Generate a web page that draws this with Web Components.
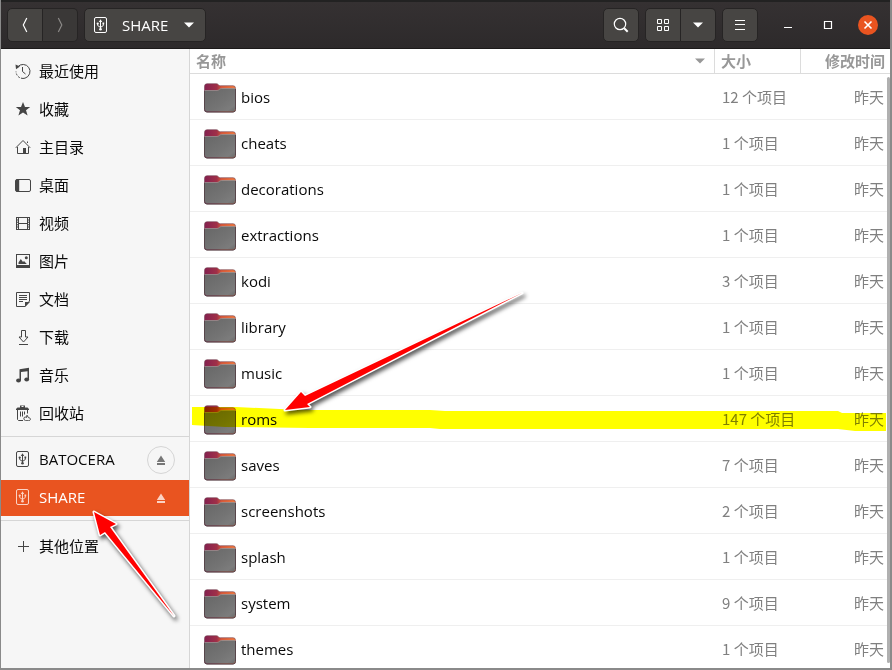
<!DOCTYPE html>
<html lang="zh-CN">
<head>
<meta charset="utf-8">
<title>SHARE</title>
<style>
  html, body { height: 100%; margin: 0; }
  body {
    background: #8a8a8a;
    font: 15px/20px "Open Sans", "Noto Sans CJK SC", sans-serif;
    color: #0a0a0a;
    overflow: hidden;
  }
</style>
</head>
<body>
<file-window>
  <header-bar slot="header"></header-bar>
  <places-bar slot="places">
    <place-item icon="recent">最近使用</place-item>
    <place-item icon="star">收藏</place-item>
    <place-item icon="home">主目录</place-item>
    <place-item icon="desktop">桌面</place-item>
    <place-item icon="video">视频</place-item>
    <place-item icon="picture">图片</place-item>
    <place-item icon="document">文档</place-item>
    <place-item icon="download">下载</place-item>
    <place-item icon="music">音乐</place-item>
    <place-item icon="trash">回收站</place-item>
    <place-item slot="devices" icon="usb" eject="ring">BATOCERA</place-item>
    <place-item slot="devices" icon="usb" eject selected>SHARE</place-item>
    <place-item slot="other" icon="plus">其他位置</place-item>
  </places-bar>
  <file-list slot="files"></file-list>
  <mark-layer slot="marks"></mark-layer>
</file-window>

<script>
const shadow = (host, html) => {
  const t = document.createElement('template');
  t.innerHTML = html;
  host.attachShadow({ mode: 'open' }).appendChild(t.content.cloneNode(true));
};

const F = 'fill="currentColor" stroke="none"';
const ICONS = {
  recent: `<path d="M2.600 4A7 7 0 1 1 1 8.500" stroke-dasharray="30 1.300 2 1.300 2 1.300"/><path ${F} d="M.5 1.500 5 3.500 1 6.200z"/><path d="M7.500 4v4.500l3 2.500"/>`,
  star: `<path ${F} d="M8 1l2 5h5.200l-4.200 3.300 1.600 5.200L8 11.400l-4.600 3.100L5 9.300.8 6H6z"/>`,
  home: `<path d="M.8 8.800 8 1.500l7.200 7.300M2.500 8v6.500h11V8M12.500 4V2.500"/><path ${F} d="M8 9h3v5.500H8z"/>`,
  desktop: `<rect x=".5" y="2.500" width="15" height="12" rx="1.500"/><path ${F} d="M1 2.500h3.200v12H1z"/>`,
  video: `<path d="M3.500 2.500h9v12h-9zM3.500 8.500h9"/><path d="M1.500 2V15M14.500 2V15" stroke-width="1"/><path d="M2.500 2V15M13.500 2V15" stroke-width="2" stroke-dasharray="1 1.400"/><path d="M1 2.500h14M1 14.500h14"/>`,
  picture: `<rect x="1.500" y="1.500" width="13" height="13"/><path ${F} d="M1 12h14v3H1zM3.500 11V9.500l2.300-3.500L8 9l1-1 2.800 3z"/><circle ${F} cx="11.300" cy="4.800" r="1.500"/>`,
  document: `<path d="M1.500 1.500h13v8.500L10 15.500H1.500zM4 4.500h8M4 6.500h8M4 8.500h8M4 10.500h4"/><path ${F} d="M10 16v-5h5z"/>`,
  download: `<path d="M6.500 1.500h4v6.500h2.500L8.500 13 4 8h2.500zM4 15.500h9"/>`,
  music: `<path ${F} d="M4.500 2.200 14 .8v11.700h-1.500V4.200L6 5v8.500H4.500z"/><ellipse ${F} cx="3.500" cy="13.400" rx="2.400" ry="2"/><ellipse ${F} cx="11.700" cy="12.400" rx="2.400" ry="2"/>`,
  trash: `<path ${F} d="M1 5V4l1.500-1.500H5V.500h5v2h2.500L14 4v1z"/><path d="M6.500 1.500h2" stroke="#f6f6f6"/><path d="M2.500 5v9.500l1 1h4.500M5.500 6.500v5M7.500 6.500v5M9.500 6.500v3M12.500 5v3.500"/><path d="M9 14.500c-.6-2 .8-3.200 2.500-2l.5-2.300 1.500 2.500c2.600 0 2.500 3 0 3h-3z"/>`,
  usb: `<rect x="1.500" y=".5" width="12" height="15" rx="1.500"/><path d="M7.500 3.500v9M4.700 6.500v2l2.800 2 2.800-2v-2"/><path ${F} d="M7.500 2.200 9.200 5H5.800zM9.500 5.500h1.700v1.800H9.500z"/><circle ${F} cx="4.700" cy="6.500" r="1.100"/><circle ${F} cx="7.500" cy="12.300" r="1.300"/>`,
  plus: `<path d="M8.500 3v11M3 8.500h11"/>`,
  eject: `<path ${F} d="M8 3.500 12.200 10H3.800zM4 11h8v2H4z"/>`,
  back: `<path d="M9.800 1 6.300 8l3.500 7" stroke-width="1.200"/>`,
  forward: `<path d="M6.300 1l3.500 7-3.500 7" stroke-width="1.200"/>`,
  down: `<path ${F} d="M3 5.500h10L8 10.500z"/>`,
  search: `<circle cx="7" cy="7" r="5.700" stroke-width="1.200"/><path d="M11.200 11.200l3.500 3.500" stroke-width="2"/>`,
  grid: `<path d="M2.500 2.500h4v4h-4zM9.500 2.500h4v4h-4zM2.500 9.500h4v4h-4zM9.500 9.500h4v4h-4z"/>`,
  menu: `<path d="M3 3.500h10M3 7.500h10M3 12.500h10"/>`,
  minimize: `<path d="M4 10.500h8"/>`,
  maximize: `<path d="M4.500 4.500h7v7h-7z" stroke-width="1.200"/>`,
  close: `<path d="M4.500 4.500l7 7M11.500 4.500l-7 7" stroke-width="1.600"/>`
};

customElements.define('ui-icon', class extends HTMLElement {
  connectedCallback() {
    if (this.shadowRoot) return;
    shadow(this, `
      <style>:host{display:block;flex:none;width:16px;height:16px} svg{display:block}</style>
      <svg width="16" height="16" viewBox="0 0 16 16" fill="none" stroke="currentColor" aria-hidden="true">${ICONS[this.getAttribute('name')]}</svg>`);
  }
});

customElements.define('folder-icon', class extends HTMLElement {
  connectedCallback() {
    if (this.shadowRoot) return;
    shadow(this, `
      <style>:host{display:block;flex:none;width:32px;height:30px} svg{display:block}</style>
      <svg width="32" height="30" viewBox="0 0 32 30" aria-hidden="true">
        <defs>
          <linearGradient id="b"><stop stop-color="#84204f"/><stop offset=".4" stop-color="#a03048"/><stop offset=".55" stop-color="#d8593a"/><stop offset="1" stop-color="#f07a40"/></linearGradient>
          <linearGradient id="f" x2="1" y2="1"><stop stop-color="#666"/><stop offset=".6" stop-color="#747474"/><stop offset=".85" stop-color="#7c7c7c"/><stop offset="1" stop-color="#6a6a6a"/></linearGradient>
        </defs>
        <path d="M.5 3.500Q.5.700 3 .7h9.500q1 0 1.800 1t2 1H29q2.500 0 2.500 2.600v21.200q0 2.500-2.500 2.500H3q-2.500 0-2.500-2.500z" fill="url(#b)" stroke="#6a3d4a" stroke-opacity=".55"/>
        <path d="M1 7.500h12c2 0 2.500-2 4.500-2H31v20.800q0 2.200-2.200 2.200H3.200Q1 28.500 1 26.300z" fill="url(#f)"/>
        <path d="M1 7.500h12c2 0 2.500-2 4.500-2H31" fill="none" stroke="#999091" stroke-width=".8"/>
        <path d="M.5 8v18.500Q.5 29 3 29h26q2.500 0 2.500-2.500V6" fill="none" stroke="#57464b"/>
      </svg>`);
  }
});

customElements.define('tool-button', class extends HTMLElement {
  connectedCallback() {
    if (this.shadowRoot) return;
    const label = this.getAttribute('label');
    shadow(this, `
      <style>
        :host{display:block}
        button{box-sizing:border-box;display:flex;align-items:center;justify-content:center;gap:13px;min-width:36px;height:34px;
          margin:0;padding:0 8px;border:1px solid #262424;border-radius:var(--r,5px);background:#474543;color:#fff;font:inherit}
        :host([join=left]) button{--r:5px 0 0 5px}
        :host([join=right]) button{--r:0 5px 5px 0;border-left:0;min-width:35px}
        :host([dim]) button{background:#3a3837;color:#8c8a88}
        :host([flat]) button{min-width:20px;width:20px;height:20px;padding:0;border:0;border-radius:50%;background:none}
        :host([flat=close]) button{background:#e95420}
        ::slotted(span){padding-bottom:1px}
      </style>
      <button ${label ? `aria-label="${label}"` : ''}><slot></slot></button>`);
  }
});

customElements.define('header-bar', class extends HTMLElement {
  constructor() {
    super();
    shadow(this, `
      <style>
        :host{display:flex;align-items:center;box-sizing:border-box;height:49px;padding:0 12px 0 6px;
          background:linear-gradient(#353132,#2d2a2b);border-top:2px solid #222;border-bottom:1px solid #1c1a1a;color:#fff}
        .group,.left,.right,.wm{display:flex;align-items:center}
        .left,.right{gap:6px}
        .left{flex:1}
        .wm{gap:20px;margin-left:14px}
      </style>
      <div class="left">
        <div class="group">
          <tool-button join="left" label="后退"><ui-icon name="back"></ui-icon></tool-button>
          <tool-button join="right" dim label="前进"><ui-icon name="forward"></ui-icon></tool-button>
        </div>
        <tool-button><ui-icon name="usb"></ui-icon><span>SHARE</span><ui-icon name="down"></ui-icon></tool-button>
      </div>
      <div class="right">
        <tool-button label="搜索"><ui-icon name="search"></ui-icon></tool-button>
        <div class="group">
          <tool-button join="left" label="网格视图"><ui-icon name="grid"></ui-icon></tool-button>
          <tool-button join="right" label="视图选项"><ui-icon name="down"></ui-icon></tool-button>
        </div>
        <tool-button label="菜单"><ui-icon name="menu"></ui-icon></tool-button>
        <div class="wm">
          <tool-button flat label="最小化"><ui-icon name="minimize"></ui-icon></tool-button>
          <tool-button flat label="最大化"><ui-icon name="maximize"></ui-icon></tool-button>
          <tool-button flat="close" label="关闭"><ui-icon name="close"></ui-icon></tool-button>
        </div>
      </div>`);
  }
});

customElements.define('place-item', class extends HTMLElement {
  connectedCallback() {
    if (this.shadowRoot) return;
    shadow(this, `
      <style>
        :host{display:flex;align-items:center;height:36px;padding:0 14px}
        :host([selected]){background:#e95420;color:#fff;--ic:#fbd3c5}
        a{flex:1;display:flex;align-items:center;gap:8px;padding-bottom:2px;color:inherit;text-decoration:none}
        ui-icon{color:var(--ic,#454545)}
        button{display:flex;align-items:center;justify-content:center;box-sizing:border-box;width:28px;height:28px;margin:0;padding:0;
          border:1px solid transparent;border-radius:50%;background:none}
        :host([eject=ring]) button{border-color:#d5d5d5;--ic:#777}
      </style>
      <a href="#"><ui-icon name="${this.getAttribute('icon')}"></ui-icon><slot></slot></a>
      ${this.hasAttribute('eject') ? '<button aria-label="弹出"><ui-icon name="eject"></ui-icon></button>' : ''}`);
  }
});

customElements.define('places-bar', class extends HTMLElement {
  constructor() {
    super();
    shadow(this, `
      <style>
        :host{display:block;box-sizing:border-box;background:#f6f6f6;border-right:1px solid #d6d6d6;padding-top:5px}
        nav{display:flex;flex-direction:column;gap:2px;padding-bottom:4px}
        nav + nav{border-top:1px solid #d6d6d6;padding-top:5px}
        nav:last-child{padding-top:8px}
      </style>
      <nav aria-label="位置"><slot></slot></nav>
      <nav aria-label="设备"><slot name="devices"></slot></nav>
      <nav aria-label="其他"><slot name="other"></slot></nav>`);
  }
});

const FILES = [['bios', 12], ['cheats', 1], ['decorations', 1], ['extractions', 1], ['kodi', 3], ['library', 1], ['music', 1],
  ['roms', 147], ['saves', 7], ['screenshots', 2], ['splash', 1], ['system', 9], ['themes', 1]];

customElements.define('file-list', class extends HTMLElement {
  constructor() {
    super();
    shadow(this, `
      <style>
        :host{display:grid;grid-template-columns:1fr;align-items:start;background:#fff;overflow:hidden;position:relative}
        table{width:100%;border-collapse:separate;border-spacing:0;table-layout:fixed}
        th,td{box-sizing:border-box;padding:0;text-align:left;font-weight:400}
        thead th{height:25px;border-bottom:1px solid #dcdcdc;border-right:1px solid #dcdcdc}
        thead th:last-child{border-right:0}
        .size{width:86px} .time{width:89px}
        th button{display:flex;align-items:center;justify-content:space-between;width:100%;height:24px;margin:0;padding:0 6px;border:0;background:none;
          color:#989898;font:inherit;font-weight:700}
        th.time button{justify-content:flex-end;padding-right:5px}
        tbody th,tbody td{height:46px;border-bottom:1px solid #efefef}
        td{color:#808080;font-family:"Noto Sans CJK SC",sans-serif}
        tbody th > div{display:flex;align-items:center;gap:5px;padding-left:14px}
        folder-icon{padding-top:2px}
        td.size{padding-left:7px}
        td.time{padding-right:6px;text-align:right}
        .bar{position:absolute;right:0;top:28px;bottom:5px;width:3px;border-radius:2px;background:#b0b0b0}
      </style>
      <table>
        <thead><tr>
          <th scope="col" aria-sort="ascending"><button>名称<ui-icon name="down"></ui-icon></button></th>
          <th scope="col" class="size"><button>大小</button></th>
          <th scope="col" class="time"><button>修改时间</button></th>
        </tr></thead>
        <tbody>${FILES.map(([n, c]) => `<tr><th scope="row"><div><folder-icon></folder-icon><span>${n}</span></div></th><td class="size">${c} 个项目</td><td class="time">昨天</td></tr>`).join('')}</tbody>
      </table>
      <div class="bar"></div>`);
  }
});

customElements.define('mark-layer', class extends HTMLElement {
  constructor() {
    super();
    shadow(this, `
      <style>
        :host{position:absolute;top:0;left:0;pointer-events:none;mix-blend-mode:multiply}
        svg{display:block}
      </style>
      <svg width="892" height="670" viewBox="0 0 892 670" aria-hidden="true">
        <path d="M192 407H236L300 410H430L445 411H838L842 413H886V431H855L838 429H440L430 428H310L225 427 192 425z" fill="#ff0"/>
      </svg>`);
  }
});

customElements.define('arrow-layer', class extends HTMLElement {
  constructor() {
    super();
    shadow(this, `
      <style>
        :host{position:absolute;top:0;left:0;pointer-events:none}
        svg{display:block;filter:drop-shadow(2px 3px 2px rgba(0,0,0,.65))}
      </style>
      <svg width="892" height="670" viewBox="0 0 892 670" fill="red" stroke="#fff" stroke-width="3" stroke-linejoin="round" paint-order="stroke" aria-hidden="true">
        <path d="M285 410 301 392 305 396 522 293 307 404 310 407z"/>
        <path d="M94 512 116 524 110 527 174 616 105 532 100 535z"/>
      </svg>`);
  }
});

customElements.define('file-window', class extends HTMLElement {
  constructor() {
    super();
    shadow(this, `
      <style>
        :host{display:flex;flex-direction:column;box-sizing:border-box;height:100vh;border:solid #8a8a8a;border-width:0 2px 2px 1px;position:relative;overflow:hidden;isolation:isolate}
        main{flex:1;min-height:0;display:grid;grid-template-columns:189px 1fr;grid-template-rows:minmax(0,1fr)}
        ::slotted(mark-layer),arrow-layer{margin-left:-1px}
      </style>
      <slot name="header"></slot>
      <main><slot name="places"></slot><slot name="files"></slot></main>
      <slot name="marks"></slot>
      <arrow-layer></arrow-layer>`);
  }
});
</script>
</body>
</html>
